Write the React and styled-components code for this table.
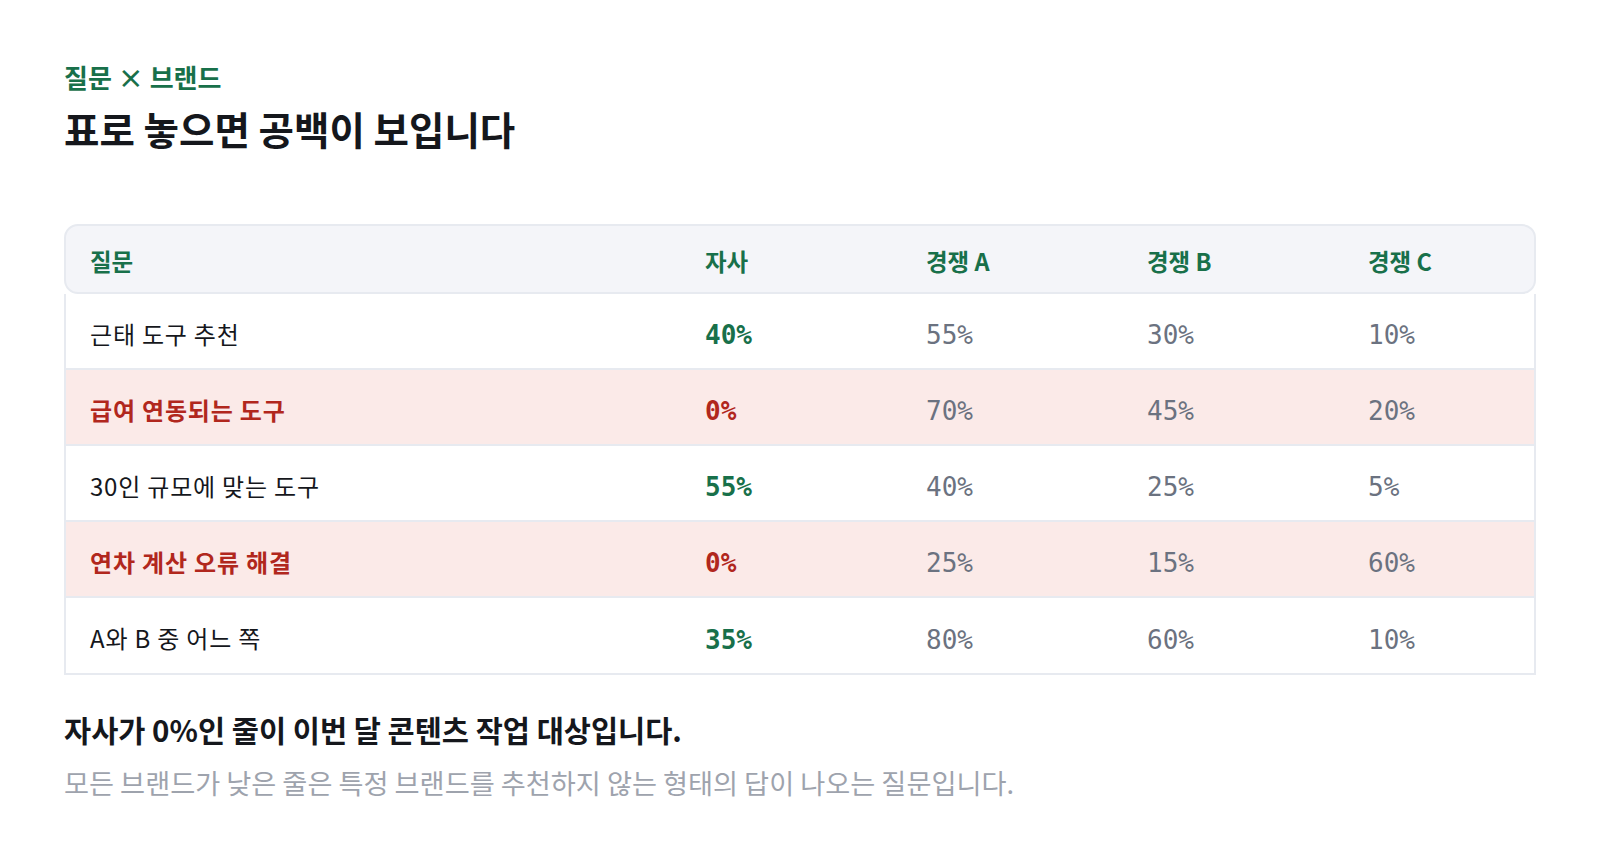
import React from "react";
import styled, { createGlobalStyle } from "styled-components";

const Global = createGlobalStyle`
  html, body { margin: 0; padding: 0; background: #ffffff; }
  body { font-family: "Noto Sans CJK KR", "Noto Sans", sans-serif; color: #15171c; }
`;

const Page = styled.main`
  padding: 60px 64px 40px;
  display: flex;
  flex-direction: column;
`;

const Eyebrow = styled.div`
  font-size: 26px;
  line-height: 34px;
  font-weight: 600;
  color: #18704a;
`;

const Title = styled.h1`
  margin: 11px 0 0;
  font-size: 38.5px;
  line-height: 47px;
  font-weight: 700;
  color: #15171c;
`;

const Table = styled.section`
  margin-top: 72px;
  display: flex;
  flex-direction: column;
`;

const cols = "615px 221px 221px 221px 1fr";

const HeadRow = styled.div`
  display: grid;
  grid-template-columns: ${cols};
  align-items: center;
  height: 70px;
  box-sizing: border-box;
  background: #f4f5f9;
  border: 2px solid #e7eaf0;
  border-radius: 14px;
`;

const HeadCell = styled.div`
  padding: 3px 0 0 24px;
  font-size: 23.5px;
  font-weight: 700;
  color: #18704a;
`;

const Body = styled.div`
  border: 2px solid #e7eaf0;
  border-top: none;
`;

const Row = styled.div`
  display: grid;
  grid-template-columns: ${cols};
  align-items: center;
  height: ${(p) => (p.$last ? "75px" : "76px")};
  box-sizing: border-box;
  padding-top: 4px;
  background: ${(p) => (p.$alert ? "#fbeae8" : "#ffffff")};
  border-bottom: ${(p) => (p.$last ? "none" : "2px solid #e7eaf0")};
`;

const QCell = styled.div`
  padding-left: 24px;
  font-size: 24px;
  letter-spacing: 0.8px;
  font-weight: ${(p) => (p.$alert ? 700 : 400)};
  color: ${(p) => (p.$alert ? "#b1271d" : "#15171c")};
`;

const Num = styled.div`
  padding: 4px 0 0 24px;
  font-family: "DejaVu Sans Mono", "Liberation Mono", monospace;
  font-size: 26px;
  font-weight: ${(p) => (p.$own ? 700 : 400)};
  color: ${(p) => (p.$own ? (p.$alert ? "#b1271d" : "#18704a") : "#6b7280")};
`;

const Summary = styled.p`
  margin: 35px 0 0;
  font-size: 29.5px;
  line-height: 39px;
  font-weight: 700;
  color: #15171c;
`;

const Note = styled.p`
  margin: 15px 0 0;
  font-size: 27.2px;
  line-height: 37px;
  font-weight: 400;
  color: #9ea3ad;
`;

const rows = [
  { q: "근태 도구 추천", own: "40%", a: "55%", b: "30%", c: "10%" },
  { q: "급여 연동되는 도구", own: "0%", a: "70%", b: "45%", c: "20%", alert: true },
  { q: "30인 규모에 맞는 도구", own: "55%", a: "40%", b: "25%", c: "5%" },
  { q: "연차 계산 오류 해결", own: "0%", a: "25%", b: "15%", c: "60%", alert: true },
  { q: "A와 B 중 어느 쪽", own: "35%", a: "80%", b: "60%", c: "10%" },
];

export default function App() {
  return (
    <>
      <Global />
      <Page>
        <Eyebrow>질문 × 브랜드</Eyebrow>
        <Title>표로 놓으면 공백이 보입니다</Title>
        <Table>
          <HeadRow>
            <HeadCell>질문</HeadCell>
            <HeadCell>자사</HeadCell>
            <HeadCell>경쟁 A</HeadCell>
            <HeadCell>경쟁 B</HeadCell>
            <HeadCell>경쟁 C</HeadCell>
          </HeadRow>
          <Body>
            {rows.map((r, i) => (
              <Row key={i} $alert={r.alert} $last={i === rows.length - 1}>
                <QCell $alert={r.alert}>{r.q}</QCell>
                <Num $own $alert={r.alert}>{r.own}</Num>
                <Num>{r.a}</Num>
                <Num>{r.b}</Num>
                <Num>{r.c}</Num>
              </Row>
            ))}
          </Body>
        </Table>
        <Summary>자사가 0%인 줄이 이번 달 콘텐츠 작업 대상입니다.</Summary>
        <Note>모든 브랜드가 낮은 줄은 특정 브랜드를 추천하지 않는 형태의 답이 나오는 질문입니다.</Note>
      </Page>
    </>
  );
}
